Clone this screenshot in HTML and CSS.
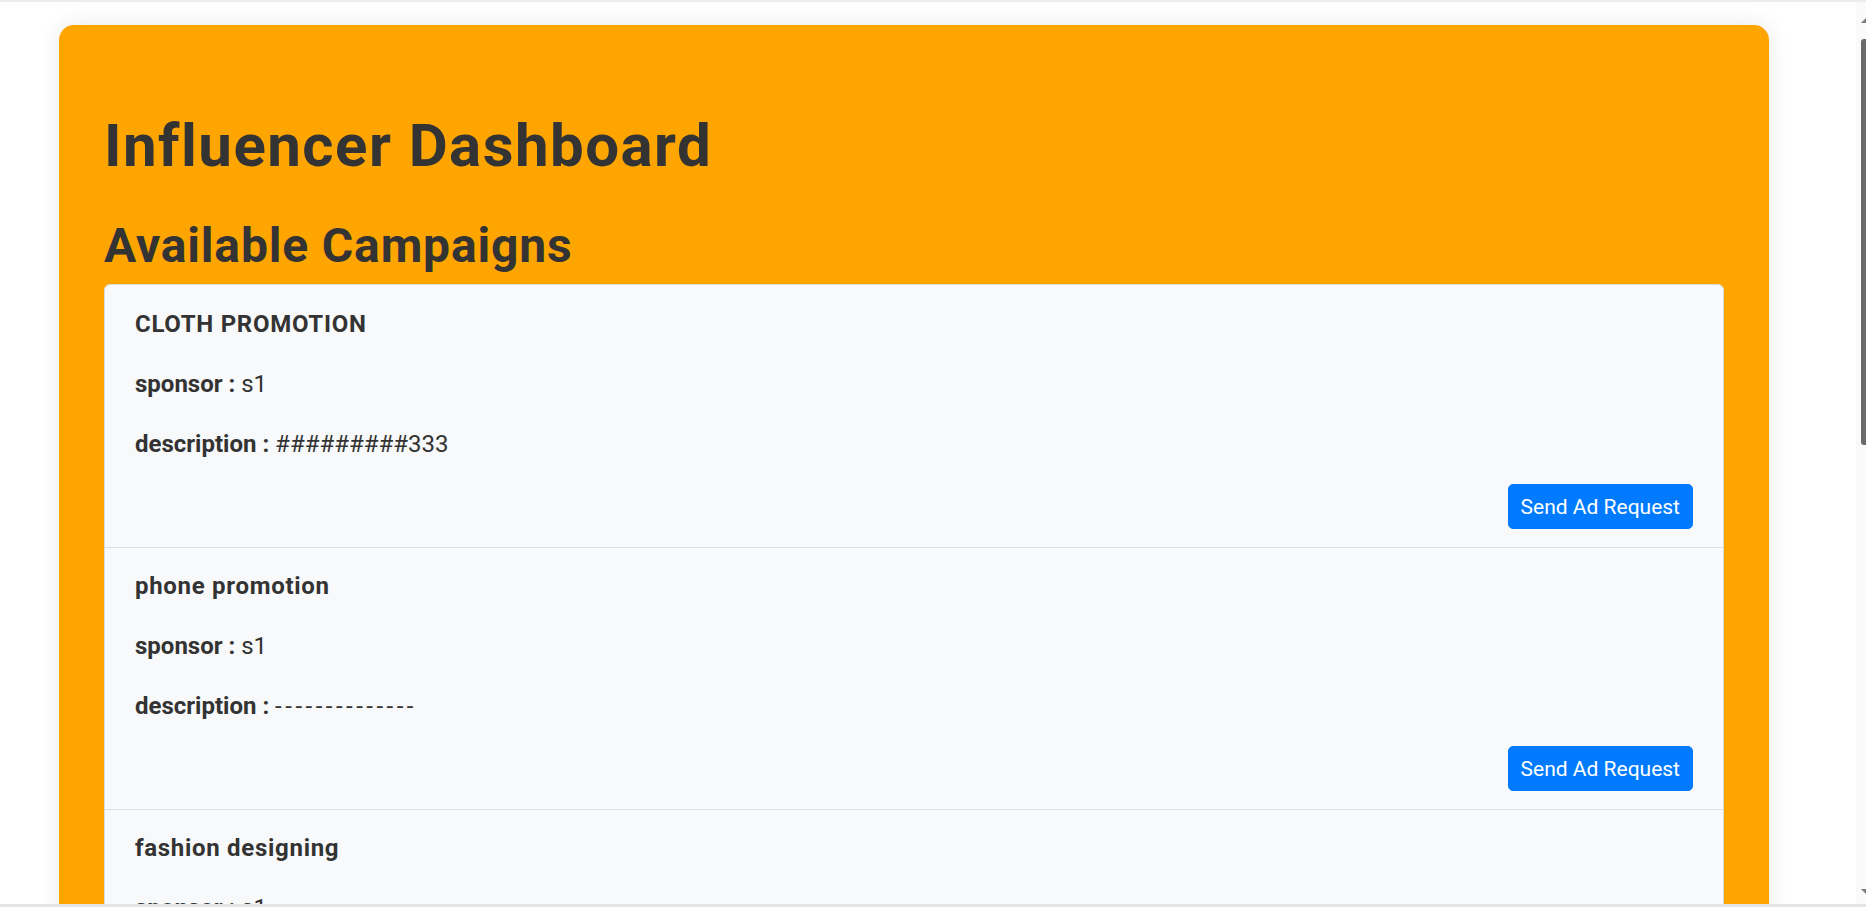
FILE: index.html
```html
<!DOCTYPE html>
<html lang="en">
<head>
<meta charset="utf-8">
<title>Influencer Dashboard</title>
<link rel="stylesheet" href="styles.css">
</head>
<body>
<div class="page">
  <div class="panel">
    <h1 class="page-title">Influencer Dashboard</h1>
    <h2 class="section-title">Available Campaigns</h2>
    <div class="card">
      <div class="item">
        <p class="item-title">CLOTH PROMOTION</p>
        <p class="field"><b>sponsor :</b> s1</p>
        <p class="field"><b>description :</b> #########333</p>
        <div class="actions"><button class="btn">Send Ad Request</button></div>
      </div>
      <div class="item">
        <p class="item-title">phone promotion</p>
        <p class="field"><b>sponsor :</b> s1</p>
        <p class="field"><b>description :</b> <span class="dashes">--------------</span></p>
        <div class="actions"><button class="btn">Send Ad Request</button></div>
      </div>
      <div class="item">
        <p class="item-title">fashion designing</p>
        <p class="field"><b>sponsor :</b> s1</p>
        <p class="field"><b>description :</b> designing</p>
        <div class="actions"><button class="btn">Send Ad Request</button></div>
      </div>
    </div>
  </div>
</div>
<div class="chrome-top"></div>
<div class="chrome-bottom"></div>
<div class="scrollbar">
  <span class="sb-arrow sb-up"></span>
  <span class="sb-thumb"></span>
  <span class="sb-arrow sb-down"></span>
</div>
</body>
</html>
```
FILE: styles.css
```css
html { overflow: hidden; }
body {
  margin: 0;
  background: #ffffff;
  font-family: "Roboto", "Liberation Sans", sans-serif;
  color: #333333;
}
.page { padding: 25px 0 40px 59px; }
.panel {
  box-sizing: border-box;
  width: 1710px;
  padding: 45px;
  background: #ffa500;
  border-radius: 15px;
  box-shadow: 0 0 22px rgba(0, 0, 0, 0.09);
}
.page-title {
  margin: 40px 0 35px;
  font-size: 60px;
  line-height: 72px;
  font-weight: 700;
  letter-spacing: 1.45px;
  color: #333333;
}
.section-title {
  margin: 0 0 9px;
  font-size: 48px;
  line-height: 58px;
  font-weight: 700;
  letter-spacing: 0.85px;
  color: #333333;
}
.card {
  background: #f8f9fa;
  border: 1px solid #dcdcdc;
  border-radius: 6px;
  overflow: hidden;
}
.item {
  padding: 18px 30px;
  border-top: 1px solid #dfe0e2;
}
.item:first-child { border-top: 0; padding-top: 19px; }
.item p {
  margin: 0 0 20px;
  font-size: 24px;
  line-height: 40px;
}
.item-title { font-weight: 700; letter-spacing: 0.7px; }
.field b { font-weight: 700; }
.dashes { letter-spacing: 3.5px; }
.actions {
  display: flex;
  justify-content: flex-end;
}
.btn {
  font-family: "Roboto", "Liberation Sans", sans-serif;
  font-size: 21px;
  line-height: 31px;
  padding: 7px 12px 5px;
  color: #ffffff;
  background: #007bff;
  border: 1px solid #007bff;
  border-radius: 5px;
  cursor: pointer;
}
.chrome-top {
  position: fixed;
  left: 0; right: 0; top: 0;
  height: 2px;
  background: #ececec;
}
.chrome-bottom {
  position: fixed;
  left: 0; right: 0; bottom: 0;
  height: 3px;
  background: #e3e3e3;
}
.scrollbar {
  position: fixed;
  top: 2px; bottom: 3px; right: 0;
  width: 10px;
  background: #fafafa;
}
.sb-thumb {
  position: absolute;
  right: 0; top: 37px;
  width: 5px; height: 406px;
  background: #6a6a6a;
  border-radius: 3px 0 0 3px;
}
.sb-arrow {
  position: absolute;
  right: 0;
  width: 0; height: 0;
  border-left: 5px solid transparent;
}
.sb-up { top: 16px; border-bottom: 5px solid #7a7a7a; }
.sb-down { bottom: 10px; border-top: 5px solid #7a7a7a; }
```
